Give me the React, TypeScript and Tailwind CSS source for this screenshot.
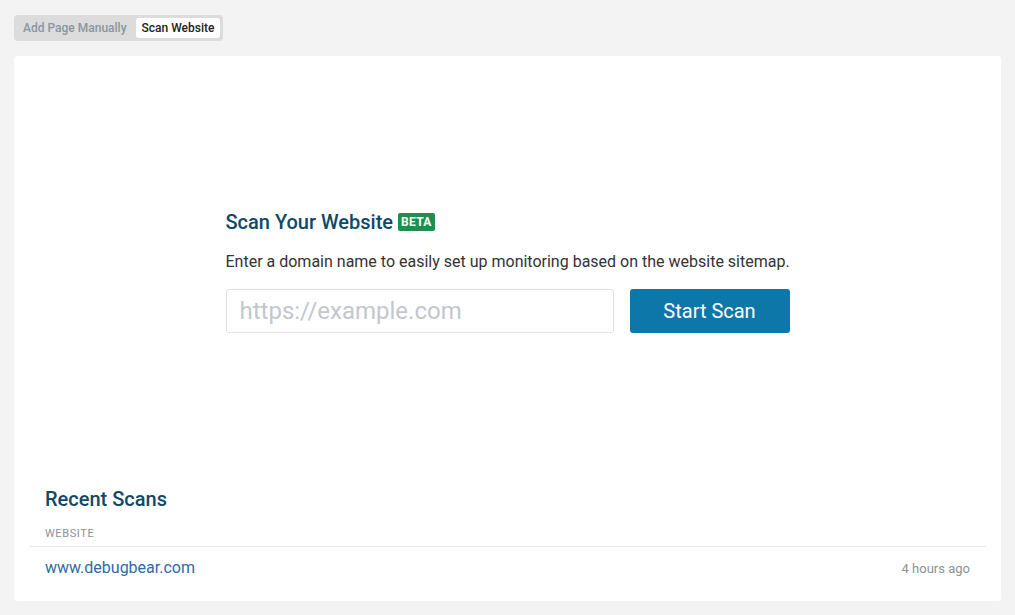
import React from 'react';

const App: React.FC = () => {
  return (
    <div className="min-h-screen bg-[#f3f3f3] px-[14px] pt-[15px] font-['Roboto',sans-serif]">
      <div className="inline-flex h-[26px] items-center rounded-[4px] bg-[#dcdcdc] px-[3px]">
        <button className="h-[20px] pl-[6px] pr-[9px] text-[12px] font-medium text-[#8a95a0]">Add Page Manually</button>
        <button className="h-[20px] rounded-[3px] bg-white px-[6px] text-[12px] font-medium text-[#222]">
          Scan Website
        </button>
      </div>

      <div className="mt-[15px] flex h-[545px] w-[987px] flex-col rounded-[4px] bg-white px-[15px] pb-[11px] pt-[15px]">
        <div className="mx-auto mt-[140px] w-[564px]">
          <div className="flex h-[22px] items-center">
            <h2 className="text-[20px] font-medium leading-[22px] text-[#0e4968]">Scan Your Website</h2>
            <span className="ml-[5px] flex h-[18px] items-center rounded-[2px] bg-[#1e8f4e] px-[3px] text-[12px] font-bold tracking-[0.3px] text-white">
              BETA
            </span>
          </div>
          <p className="mt-[18px] whitespace-nowrap text-[16px] leading-[22px] text-[#333]">
            Enter a domain name to easily set up monitoring based on the website sitemap.
          </p>
          <div className="mt-[16px] flex gap-[16px]">
            <input
              className="h-[44px] w-[388px] rounded-[3px] border border-[#e2e2e2] px-[13px] text-[24px] text-[#333] outline-none placeholder:text-[#c3c7cc]"
              placeholder="https://example.com"
            />
            <button className="h-[44px] w-[160px] rounded-[3px] bg-[#0e77aa] text-[20px] text-white">Start Scan</button>
          </div>
        </div>

        <div className="mt-auto">
          <h3 className="px-[16px] text-[20px] font-medium leading-[24px] text-[#0e4968]">Recent Scans</h3>
          <table className="mt-[16px] w-full">
            <thead>
              <tr className="border-b border-[#e8e8e8]">
                <th className="px-[16px] pb-[6px] text-left text-[11px] font-normal leading-[13px] tracking-[0.6px] text-[#8b9299]">
                  WEBSITE
                </th>
                <th />
              </tr>
            </thead>
            <tbody>
              <tr className="h-[44px]">
                <td className="px-[16px] text-[16px] text-[#2f69a8]">www.debugbear.com</td>
                <td className="px-[16px] text-right text-[13px] text-[#8b9299]">4 hours ago</td>
              </tr>
            </tbody>
          </table>
        </div>
      </div>
    </div>
  );
};

export default App;
